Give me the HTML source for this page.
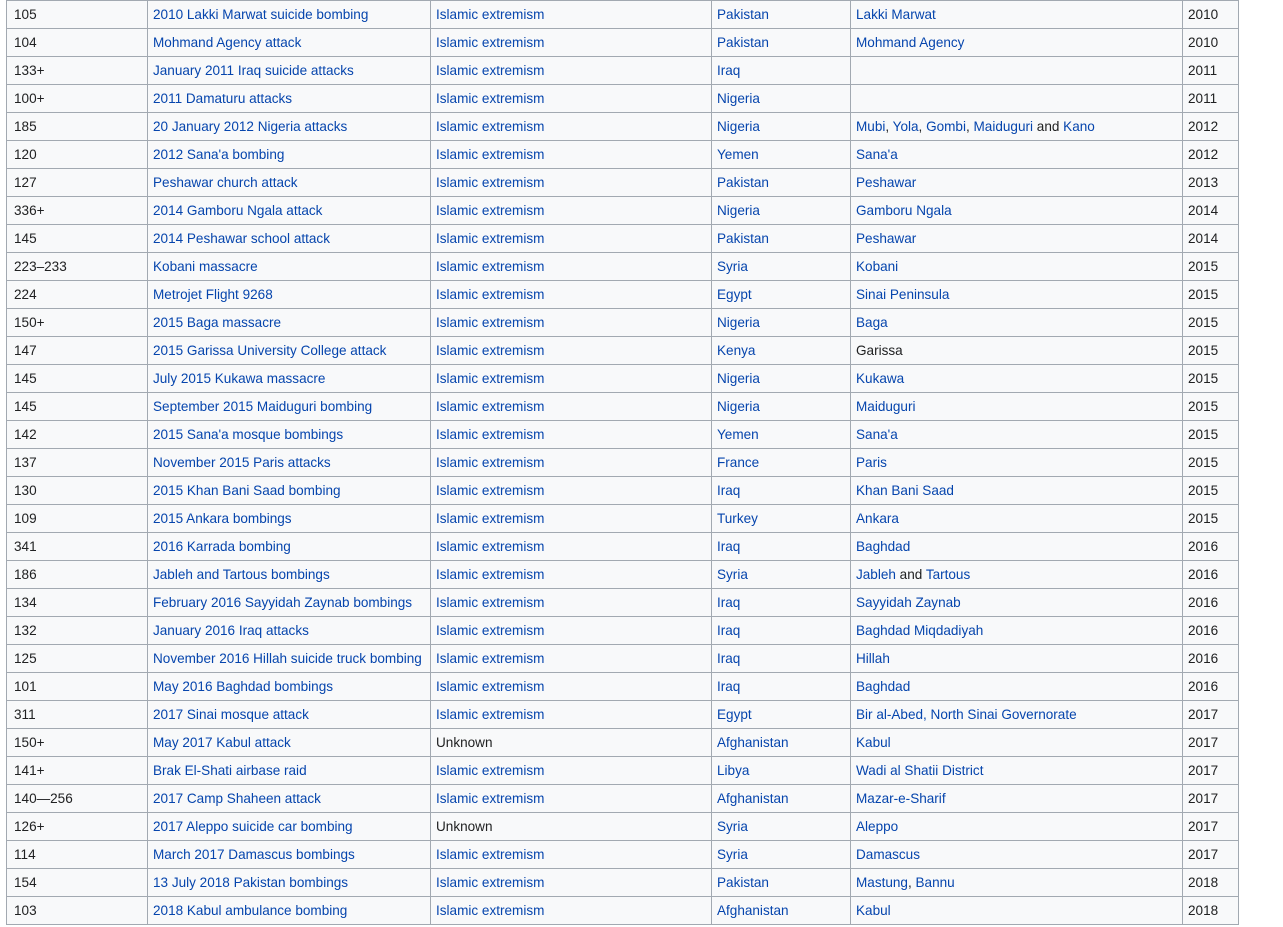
<!DOCTYPE html>
<html><head><meta charset="utf-8"><style>
body{margin:0;background:#fff;font-family:"Liberation Sans",Arial,sans-serif;font-size:13.55px;color:#202122}
table{position:absolute;left:6px;top:0;border-collapse:collapse;table-layout:fixed;width:1232px;background:#f8f9fa}
td{border:1px solid #a2a9b1;padding:0 0 0 5px;line-height:27px;height:27px;white-space:nowrap;overflow:hidden}
td:first-child{padding-left:7px}
a{color:#0645ad;text-decoration:none}
</style></head><body>
<table>
<colgroup><col style="width:141px"><col style="width:283px"><col style="width:281px"><col style="width:139px"><col style="width:332px"><col style="width:56px"></colgroup>
<tr><td>105</td><td><a>2010 Lakki Marwat suicide bombing</a></td><td><a>Islamic extremism</a></td><td><a>Pakistan</a></td><td><a>Lakki Marwat</a></td><td>2010</td></tr>
<tr><td>104</td><td><a>Mohmand Agency attack</a></td><td><a>Islamic extremism</a></td><td><a>Pakistan</a></td><td><a>Mohmand Agency</a></td><td>2010</td></tr>
<tr><td>133+</td><td><a>January 2011 Iraq suicide attacks</a></td><td><a>Islamic extremism</a></td><td><a>Iraq</a></td><td></td><td>2011</td></tr>
<tr><td>100+</td><td><a>2011 Damaturu attacks</a></td><td><a>Islamic extremism</a></td><td><a>Nigeria</a></td><td></td><td>2011</td></tr>
<tr><td>185</td><td><a>20 January 2012 Nigeria attacks</a></td><td><a>Islamic extremism</a></td><td><a>Nigeria</a></td><td><a>Mubi</a>, <a>Yola</a>, <a>Gombi</a>, <a>Maiduguri</a> and <a>Kano</a></td><td>2012</td></tr>
<tr><td>120</td><td><a>2012 Sana'a bombing</a></td><td><a>Islamic extremism</a></td><td><a>Yemen</a></td><td><a>Sana'a</a></td><td>2012</td></tr>
<tr><td>127</td><td><a>Peshawar church attack</a></td><td><a>Islamic extremism</a></td><td><a>Pakistan</a></td><td><a>Peshawar</a></td><td>2013</td></tr>
<tr><td>336+</td><td><a>2014 Gamboru Ngala attack</a></td><td><a>Islamic extremism</a></td><td><a>Nigeria</a></td><td><a>Gamboru Ngala</a></td><td>2014</td></tr>
<tr><td>145</td><td><a>2014 Peshawar school attack</a></td><td><a>Islamic extremism</a></td><td><a>Pakistan</a></td><td><a>Peshawar</a></td><td>2014</td></tr>
<tr><td>223–233</td><td><a>Kobani massacre</a></td><td><a>Islamic extremism</a></td><td><a>Syria</a></td><td><a>Kobani</a></td><td>2015</td></tr>
<tr><td>224</td><td><a>Metrojet Flight 9268</a></td><td><a>Islamic extremism</a></td><td><a>Egypt</a></td><td><a>Sinai Peninsula</a></td><td>2015</td></tr>
<tr><td>150+</td><td><a>2015 Baga massacre</a></td><td><a>Islamic extremism</a></td><td><a>Nigeria</a></td><td><a>Baga</a></td><td>2015</td></tr>
<tr><td>147</td><td><a>2015 Garissa University College attack</a></td><td><a>Islamic extremism</a></td><td><a>Kenya</a></td><td>Garissa</td><td>2015</td></tr>
<tr><td>145</td><td><a>July 2015 Kukawa massacre</a></td><td><a>Islamic extremism</a></td><td><a>Nigeria</a></td><td><a>Kukawa</a></td><td>2015</td></tr>
<tr><td>145</td><td><a>September 2015 Maiduguri bombing</a></td><td><a>Islamic extremism</a></td><td><a>Nigeria</a></td><td><a>Maiduguri</a></td><td>2015</td></tr>
<tr><td>142</td><td><a>2015 Sana'a mosque bombings</a></td><td><a>Islamic extremism</a></td><td><a>Yemen</a></td><td><a>Sana'a</a></td><td>2015</td></tr>
<tr><td>137</td><td><a>November 2015 Paris attacks</a></td><td><a>Islamic extremism</a></td><td><a>France</a></td><td><a>Paris</a></td><td>2015</td></tr>
<tr><td>130</td><td><a>2015 Khan Bani Saad bombing</a></td><td><a>Islamic extremism</a></td><td><a>Iraq</a></td><td><a>Khan Bani Saad</a></td><td>2015</td></tr>
<tr><td>109</td><td><a>2015 Ankara bombings</a></td><td><a>Islamic extremism</a></td><td><a>Turkey</a></td><td><a>Ankara</a></td><td>2015</td></tr>
<tr><td>341</td><td><a>2016 Karrada bombing</a></td><td><a>Islamic extremism</a></td><td><a>Iraq</a></td><td><a>Baghdad</a></td><td>2016</td></tr>
<tr><td>186</td><td><a>Jableh and Tartous bombings</a></td><td><a>Islamic extremism</a></td><td><a>Syria</a></td><td><a>Jableh</a> and <a>Tartous</a></td><td>2016</td></tr>
<tr><td>134</td><td><a>February 2016 Sayyidah Zaynab bombings</a></td><td><a>Islamic extremism</a></td><td><a>Iraq</a></td><td><a>Sayyidah Zaynab</a></td><td>2016</td></tr>
<tr><td>132</td><td><a>January 2016 Iraq attacks</a></td><td><a>Islamic extremism</a></td><td><a>Iraq</a></td><td><a>Baghdad Miqdadiyah</a></td><td>2016</td></tr>
<tr><td>125</td><td><a>November 2016 Hillah suicide truck bombing</a></td><td><a>Islamic extremism</a></td><td><a>Iraq</a></td><td><a>Hillah</a></td><td>2016</td></tr>
<tr><td>101</td><td><a>May 2016 Baghdad bombings</a></td><td><a>Islamic extremism</a></td><td><a>Iraq</a></td><td><a>Baghdad</a></td><td>2016</td></tr>
<tr><td>311</td><td><a>2017 Sinai mosque attack</a></td><td><a>Islamic extremism</a></td><td><a>Egypt</a></td><td><a>Bir al-Abed, North Sinai Governorate</a></td><td>2017</td></tr>
<tr><td>150+</td><td><a>May 2017 Kabul attack</a></td><td>Unknown</td><td><a>Afghanistan</a></td><td><a>Kabul</a></td><td>2017</td></tr>
<tr><td>141+</td><td><a>Brak El-Shati airbase raid</a></td><td><a>Islamic extremism</a></td><td><a>Libya</a></td><td><a>Wadi al Shatii District</a></td><td>2017</td></tr>
<tr><td>140—256</td><td><a>2017 Camp Shaheen attack</a></td><td><a>Islamic extremism</a></td><td><a>Afghanistan</a></td><td><a>Mazar-e-Sharif</a></td><td>2017</td></tr>
<tr><td>126+</td><td><a>2017 Aleppo suicide car bombing</a></td><td>Unknown</td><td><a>Syria</a></td><td><a>Aleppo</a></td><td>2017</td></tr>
<tr><td>114</td><td><a>March 2017 Damascus bombings</a></td><td><a>Islamic extremism</a></td><td><a>Syria</a></td><td><a>Damascus</a></td><td>2017</td></tr>
<tr><td>154</td><td><a>13 July 2018 Pakistan bombings</a></td><td><a>Islamic extremism</a></td><td><a>Pakistan</a></td><td><a>Mastung</a>, <a>Bannu</a></td><td>2018</td></tr>
<tr><td>103</td><td><a>2018 Kabul ambulance bombing</a></td><td><a>Islamic extremism</a></td><td><a>Afghanistan</a></td><td><a>Kabul</a></td><td>2018</td></tr>
</table>
</body></html>
